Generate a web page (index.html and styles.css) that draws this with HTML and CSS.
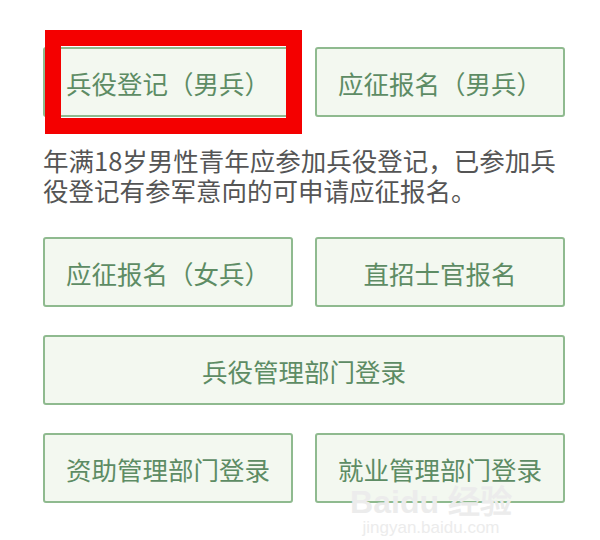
FILE: index.html
```html
<!DOCTYPE html>
<html lang="zh-CN">
<head>
<meta charset="utf-8">
<link rel="stylesheet" href="styles.css">
</head>
<body>
<div class="page">
  <div class="row">
    <div class="btn marked">兵役登记（男兵）<span class="mark"></span></div>
    <div class="btn">应征报名（男兵）</div>
  </div>
  <p class="desc">年满18岁男性青年应参加兵役登记，已参加兵役登记有参军意向的可申请应征报名。</p>
  <div class="row">
    <div class="btn">应征报名（女兵）</div>
    <div class="btn">直招士官报名</div>
  </div>
  <div class="row row-gap">
    <div class="btn">兵役管理部门登录</div>
  </div>
  <div class="row row-gap">
    <div class="btn">资助管理部门登录</div>
    <div class="btn">就业管理部门登录</div>
  </div>
  <div class="watermark">
    <div class="wm-logo">Bai<span class="wm-du">du</span> 经验</div>
    <div class="wm-url">jingyan.baidu.com</div>
  </div>
</div>
</body>
</html>
```
FILE: styles.css
```css
html, body {
  margin: 0;
  padding: 0;
  background: #ffffff;
}
.page {
  position: relative;
  width: 600px;
  height: 540px;
  box-sizing: border-box;
  padding: 47px 35px 0 43px;
  font-family: "Noto Sans CJK SC", "Microsoft YaHei", sans-serif;
}
.row {
  display: flex;
  gap: 22px;
}
.row-gap {
  margin-top: 28px;
}
.btn {
  position: relative;
  flex: 1;
  height: 70px;
  box-sizing: border-box;
  border: 2px solid #8fba8f;
  border-radius: 3px;
  background: #f3f8f0;
  color: #5d8c64;
  font-size: 25.5px;
  display: flex;
  align-items: center;
  justify-content: center;
}
.mark {
  position: absolute;
  left: 0;
  top: -19px;
  width: 257px;
  height: 104px;
  box-sizing: border-box;
  border: 16px solid #f40000;
}
.desc {
  margin: 28px 0 32px;
  font-size: 25.5px;
  line-height: 30px;
  color: #555555;
  width: 522px;
}
.watermark {
  position: absolute;
  left: 340px;
  top: 486px;
  color: #ececec;
  font-family: "Liberation Sans", sans-serif;
  text-align: center;
  width: 182px;
}
.wm-logo {
  font-size: 32px;
  font-weight: bold;
  line-height: 32px;
}
.wm-url {
  font-size: 17px;
  line-height: 20px;
}
```
